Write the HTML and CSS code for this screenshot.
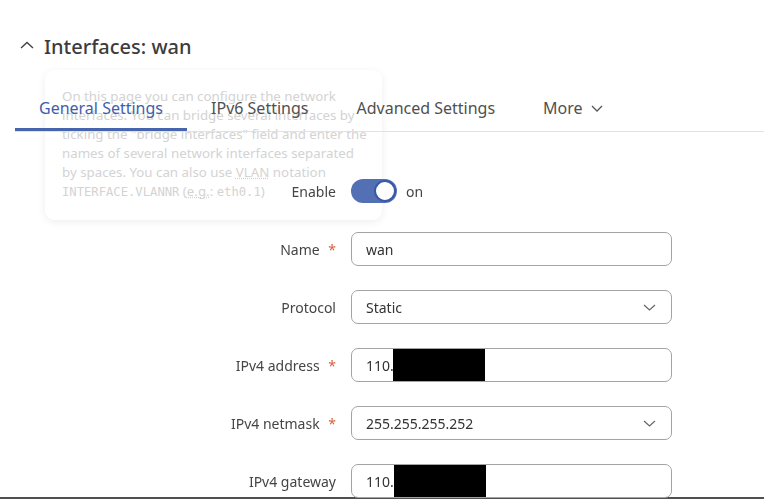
FILE: index.html
```html
<!DOCTYPE html>
<html lang="en">
<head>
  <meta charset="UTF-8">
  <meta name="viewport" content="width=device-width, initial-scale=1.0">
  <title>Interfaces: wan</title>
  <link rel="stylesheet" href="styles.css">
</head>
<body>
  <div class="section-head">
    <svg class="collapse" width="14" height="8" viewBox="0 0 14 8"><path d="M1 7 L7 1.5 L13 7" fill="none" stroke="#444" stroke-width="1.4"/></svg>
    <h2>Interfaces: wan</h2>
  </div>

  <div class="tabs">
    <div class="tab active">General Settings</div>
    <div class="tab">IPv6 Settings</div>
    <div class="tab">Advanced Settings</div>
    <div class="tab">More
      <svg width="12" height="7" viewBox="0 0 12 7"><path d="M1 1 L6 6 L11 1" fill="none" stroke="#555" stroke-width="1.3"/></svg>
    </div>
  </div>

  <div class="form">
    <label class="lbl">Enable</label>
    <div class="field">
      <span class="toggle"><span class="knob"></span></span>
      <span class="toggle-text">on</span>
    </div>

    <label class="lbl">Name <span class="req">*</span></label>
    <div class="input">wan</div>

    <label class="lbl">Protocol</label>
    <div class="input select">Static
      <svg width="13" height="7" viewBox="0 0 13 7"><path d="M1 1 L6.5 6 L12 1" fill="none" stroke="#666" stroke-width="1.2"/></svg>
    </div>

    <label class="lbl">IPv4 address <span class="req">*</span></label>
    <div class="input">110.<span class="redact"></span></div>

    <label class="lbl">IPv4 netmask <span class="req">*</span></label>
    <div class="input select">255.255.255.252
      <svg width="13" height="7" viewBox="0 0 13 7"><path d="M1 1 L6.5 6 L12 1" fill="none" stroke="#666" stroke-width="1.2"/></svg>
    </div>

    <label class="lbl">IPv4 gateway</label>
    <div class="input">110.<span class="redact gw"></span></div>
  </div>

  <div class="hint">
    On this page you can configure the network<br>
    interfaces. You can bridge several interfaces by<br>
    ticking the "bridge interfaces" field and enter the<br>
    names of several network interfaces separated<br>
    by spaces. You can also use <abbr>VLAN</abbr> notation<br>
    <code>INTERFACE.VLANNR</code> (<abbr>e.g.</abbr>: <code>eth0.1</code>)
  </div>

  <div class="bottom-edge"></div>
</body>
</html>
```

FILE: styles.css
```css
html {
  overflow: hidden;
}

body {
  font-family: "Noto Sans", "Open Sans", sans-serif;
  color: #404040;
  background-color: #fff;
  margin: 0;
  padding: 0;
}

.section-head {
  display: flex;
  align-items: center;
  gap: 10px;
  height: 32px;
  padding: 30px 0 0 20px;
}

.section-head h2 {
  margin: 0;
  font-size: 20px;
  font-weight: 500;
  color: #3c3c3c;
}

.collapse {
  margin-top: -2px;
}

.tabs {
  position: relative;
  z-index: 1;
  display: flex;
  margin: 22px 0 0 15px;
  border-bottom: 1px solid #e2e2e2;
}

.tab {
  display: flex;
  align-items: center;
  gap: 8px;
  padding: 12px 24px 8px;
  line-height: 24px;
  font-size: 16px;
  color: #505050;
  border-bottom: 3px solid transparent;
}

.tab.active {
  color: #3f5ea9;
  border-bottom-color: #4765ad;
}

.form {
  position: relative;
  z-index: 1;
  display: grid;
  grid-template-columns: 336px 321px;
  column-gap: 15px;
  row-gap: 24px;
  align-items: center;
  margin-top: 42px;
}

.lbl {
  text-align: right;
  font-size: 14px;
  color: #454545;
}

.req {
  color: #d8603c;
  margin-left: 5px;
}

.field {
  display: flex;
  align-items: center;
  height: 34px;
}

.toggle {
  display: flex;
  justify-content: flex-end;
  align-items: center;
  width: 46px;
  height: 24px;
  border-radius: 12px;
  background-color: #5470b4;
  box-sizing: border-box;
  padding: 1px;
}

.knob {
  width: 18px;
  height: 18px;
  border-radius: 50%;
  background: #fff;
  border: 2px solid #3a58a5;
}

.toggle-text {
  margin-left: 9px;
  font-size: 14px;
  color: #454545;
}

.input {
  display: flex;
  align-items: center;
  height: 34px;
  box-sizing: border-box;
  padding: 0 14px;
  border: 1px solid #a3a3a3;
  border-radius: 7px;
  font-size: 14px;
  color: #333;
}

.select {
  justify-content: space-between;
  padding-right: 15px;
}

.redact {
  align-self: stretch;
  width: 92px;
  margin: 0 0 0 -1px;
  background: #000;
}

.redact.gw {
  margin-left: 0;
}

.hint {
  position: absolute;
  left: 45px;
  top: 70px;
  width: 337px;
  box-sizing: border-box;
  padding: 17px 17px 18px;
  font-size: 13.3px;
  line-height: 19px;
  color: #d3d3d3;
  background: #fff;
  border-radius: 9px;
  box-shadow: 0 2px 8px rgba(0, 0, 0, 0.07);
  white-space: nowrap;
}

.hint code {
  font-family: "DejaVu Sans Mono", monospace;
  font-size: 12.2px;
}

.hint abbr {
  text-decoration: underline dotted;
}

.bottom-edge {
  position: fixed;
  left: 0;
  right: 0;
  bottom: 0;
  height: 2px;
  background: #505050;
}
```
